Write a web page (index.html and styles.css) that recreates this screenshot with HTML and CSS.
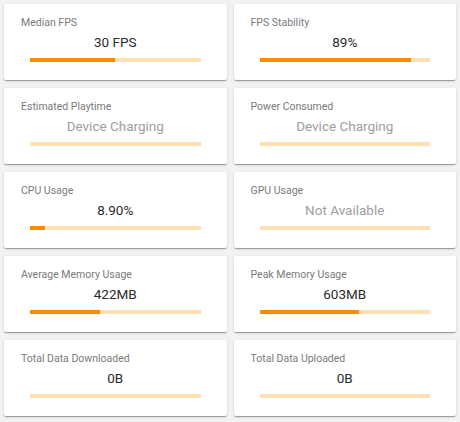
FILE: index.html
```html
<!DOCTYPE html>
<html lang="en">
<head>
    <meta charset="UTF-8">
    <meta name="viewport" content="width=device-width, initial-scale=1.0">
    <title>Session Stats</title>
    <link rel="stylesheet" href="styles.css">
</head>
<body>
    <div class="stats">
        <div class="card">
            <div class="label">Median FPS</div>
            <div class="value">30 FPS</div>
            <div class="bar"><div class="fill" style="width: 50%"></div></div>
        </div>
        <div class="card">
            <div class="label">FPS Stability</div>
            <div class="value">89%</div>
            <div class="bar"><div class="fill" style="width: 89%"></div></div>
        </div>

        <div class="card">
            <div class="label">Estimated Playtime</div>
            <div class="value muted">Device Charging</div>
            <div class="bar"></div>
        </div>
        <div class="card">
            <div class="label">Power Consumed</div>
            <div class="value muted">Device Charging</div>
            <div class="bar"></div>
        </div>

        <div class="card">
            <div class="label">CPU Usage</div>
            <div class="value">8.90%</div>
            <div class="bar"><div class="fill" style="width: 8.9%"></div></div>
        </div>
        <div class="card">
            <div class="label">GPU Usage</div>
            <div class="value muted">Not Available</div>
            <div class="bar"></div>
        </div>

        <div class="card">
            <div class="label">Average Memory Usage</div>
            <div class="value">422MB</div>
            <div class="bar"><div class="fill" style="width: 41%"></div></div>
        </div>
        <div class="card">
            <div class="label">Peak Memory Usage</div>
            <div class="value">603MB</div>
            <div class="bar"><div class="fill" style="width: 58.5%"></div></div>
        </div>

        <div class="card">
            <div class="label">Total Data Downloaded</div>
            <div class="value">0B</div>
            <div class="bar"></div>
        </div>
        <div class="card">
            <div class="label">Total Data Uploaded</div>
            <div class="value">0B</div>
            <div class="bar"></div>
        </div>
    </div>
</body>
</html>
```

FILE: styles.css
```css
body {
    margin: 0;
    padding: 4px;
    background-color: #f2f2f2;
    font-family: Roboto, 'Liberation Sans', sans-serif;
}

.stats {
    display: grid;
    grid-template-columns: 1fr 1fr;
    column-gap: 7px;
    row-gap: 8px;
}

.card {
    height: 76px;
    box-sizing: border-box;
    padding: 12px 17px 0 17px;
    background-color: #fff;
    border-radius: 2px;
    box-shadow: 0 2px 1px -1px rgba(0, 0, 0, 0.2),
                0 1px 1px 0 rgba(0, 0, 0, 0.14),
                0 1px 3px 0 rgba(0, 0, 0, 0.12);
}

.label {
    font-size: 10.5px;
    line-height: 14px;
    color: #7a7a7a;
}

.value {
    margin-top: 3px;
    font-size: 13.5px;
    line-height: 18px;
    color: #2b2b2b;
    text-align: center;
}

.value.muted {
    color: #9e9e9e;
}

/* barre de progression */
.bar {
    height: 4px;
    margin: 7px 9px 0 9px;
    background-color: #ffe0b2;
}

.fill {
    height: 100%;
    background-color: #fb8c00;
}
```
